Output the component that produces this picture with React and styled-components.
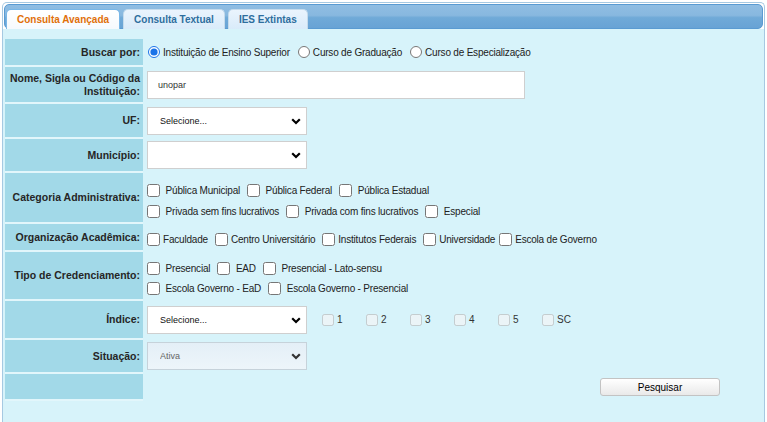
import React from 'react';
import styled, { createGlobalStyle } from 'styled-components';

const Global = createGlobalStyle`
  html, body { margin: 0; padding: 0; background: #fff; }
  body {
    font-family: "Liberation Sans", Arial, sans-serif;
    font-size: 10px;
    color: #222;
    overflow: hidden;
  }
`;

const Widget = styled.div`
  margin: 2px 2px 0 2px;
  height: 430px;
  border: 1px solid #a6c9e2;
  border-bottom: none;
  border-radius: 5px 5px 0 0;
  background: #fff;
  padding-top: 1px;
  display: flex;
  flex-direction: column;
  box-sizing: border-box;
`;

const Header = styled.div`
  margin: 0 1px;
  height: 25px;
  box-sizing: border-box;
  border: 1px solid #5a9bd2;
  border-radius: 5px;
  background: linear-gradient(#8fbde3 0%, #88b8df 45%, #70aad8 55%, #68a3d5 100%);
  padding: 4px 1px 0 1px;
  display: flex;
  gap: 3px;
`;

const Tab = styled.div`
  height: 20px;
  box-sizing: border-box;
  padding: 0 10px;
  display: flex;
  align-items: center;
  font-weight: bold;
  font-size: 10px;
  border: 1px solid ${p => (p.$active ? '#79b7e7' : '#c5dbec')};
  border-bottom: none;
  border-radius: 5px 5px 0 0;
  color: ${p => (p.$active ? '#e17009' : '#2e6e9e')};
  background: ${p =>
    p.$active
      ? 'linear-gradient(#ffffff, #f6fafd)'
      : 'linear-gradient(#eaf4fd, #d9ebfa)'};
  white-space: nowrap;
`;

const Panel = styled.div`
  flex: 1;
  background: #d7f3fa;
  padding: 10px 2px 0 2px;
`;

const Row = styled.div`
  display: flex;
  height: ${p => p.$h + 2}px;
`;

const Label = styled.div`
  width: 138px;
  box-sizing: border-box;
  background: #a2d9e8;
  border-bottom: 2px solid #e2f6fb;
  display: flex;
  align-items: center;
  justify-content: flex-end;
  text-align: right;
  padding-right: 3px;
  font-weight: bold;
  font-size: 10.5px;
  line-height: 13px;
  color: #262626;
`;

const Value = styled.div`
  flex: 1;
  display: flex;
  flex-direction: ${p => (p.$col ? 'column' : 'row')};
  align-items: ${p => (p.$top ? 'flex-start' : p.$col ? 'stretch' : 'center')};
  justify-content: ${p => (p.$col ? 'center' : 'flex-start')};
  padding-top: ${p => p.$pt || 0}px;
  padding-bottom: 2px;
  box-sizing: border-box;
  white-space: nowrap;
`;

const Line = styled.div`
  height: 21px;
  display: flex;
  align-items: center;
`;

const Opt = styled.label`
  display: inline-flex;
  align-items: center;
  color: #222;
  letter-spacing: -0.2px;
  margin-right: ${p => p.$gap ?? 3}px;
  input { margin: 0 3px 0 4px; width: 13px; height: 13px; }
`;

const RadioOpt = styled.label`
  display: inline-flex;
  align-items: center;
  color: #222;
  letter-spacing: -0.2px;
  margin-right: 3px;
  input { margin: 0 3px 0 5px; width: 12px; height: 12px; accent-color: #1a73e8; }
`;

const TextInput = styled.input`
  margin-left: 4px;
  width: 378px;
  height: 28px;
  box-sizing: border-box;
  border: 1px solid #cfcfcf;
  background: #fff;
  padding: 0 10px;
  font-family: "Liberation Sans", Arial, sans-serif;
  font-size: 9px;
  color: #333;
  outline: none;
`;

const SelectWrap = styled.div`
  position: relative;
  margin-left: 4px;
  width: 160px;
  height: 28px;
`;

const Select = styled.select`
  appearance: none;
  width: 100%;
  height: 100%;
  box-sizing: border-box;
  border: 1px solid ${p => (p.$muted ? '#c6d2da' : '#cfcfcf')};
  background: ${p => (p.$muted ? 'linear-gradient(#e4eff7, #edf5fa)' : '#fff')};
  padding: 0 0 0 12px;
  font-family: "Liberation Sans", Arial, sans-serif;
  font-size: 9px;
  color: ${p => (p.$muted ? '#666' : '#111')};
  outline: none;
`;

const Chevron = styled.svg`
  position: absolute;
  right: 6px;
  top: 11px;
  pointer-events: none;
`;

const IndexList = styled.div`
  display: flex;
  margin-left: 11px;
`;

const IndexOpt = styled.label`
  width: 44px;
  display: flex;
  align-items: center;
  color: #333;
  input { margin: 0 3px 0 4px; width: 12px; height: 12px; }
`;

const Button = styled.button`
  margin: 4px 0 0 457px;
  width: 120px;
  height: 18px;
  box-sizing: border-box;
  border: 1px solid #c3c3c3;
  border-radius: 3px;
  background: linear-gradient(#ffffff, #e9e9e9);
  font-family: "Liberation Sans", Arial, sans-serif;
  font-size: 10px;
  color: #000;
  padding: 0;
`;

const Dropdown = ({ value, muted }) => (
  <SelectWrap>
    <Select $muted={muted} defaultValue={value}>
      <option value={value}>{value}</option>
    </Select>
    <Chevron width="10" height="7" viewBox="0 0 10 7">
      <polyline points="1.2,1.2 5,5 8.8,1.2" fill="none" stroke={muted ? '#333' : '#000'} strokeWidth="2.2" />
    </Chevron>
  </SelectWrap>
);

const Check = ({ text, nb, gap }) => (
  <Opt $gap={gap}>
    <input type="checkbox" />
    {nb ? '\u00a0' : ''}
    {text}
  </Opt>
);

export default function App() {
  return (
    <>
      <Global />
      <Widget>
        <Header>
          <Tab $active>Consulta Avançada</Tab>
          <Tab>Consulta Textual</Tab>
          <Tab>IES Extintas</Tab>
        </Header>
        <Panel>
          <Row $h={26}>
            <Label>Buscar por:</Label>
            <Value>
              <RadioOpt><input type="radio" name="b" defaultChecked />Instituição de Ensino Superior</RadioOpt>
              <RadioOpt><input type="radio" name="b" />Curso de Graduação</RadioOpt>
              <RadioOpt><input type="radio" name="b" />Curso de Especialização</RadioOpt>
            </Value>
          </Row>
          <Row $h={35}>
            <Label>Nome, Sigla ou Código da<br />Instituição:</Label>
            <Value>
              <TextInput defaultValue="unopar" />
            </Value>
          </Row>
          <Row $h={33}>
            <Label>UF:</Label>
            <Value><Dropdown value="Selecione..." /></Value>
          </Row>
          <Row $h={32}>
            <Label>Município:</Label>
            <Value><Dropdown value="" /></Value>
          </Row>
          <Row $h={49}>
            <Label>Categoria Administrativa:</Label>
            <Value $col $pt={6}>
              <Line>
                <Check nb text="Pública Municipal" />
                <Check nb text="Pública Federal" />
                <Check nb text="Pública Estadual" />
              </Line>
              <Line>
                <Check nb text="Privada sem fins lucrativos" />
                <Check nb text="Privada com fins lucrativos" />
                <Check nb text="Especial" />
              </Line>
            </Value>
          </Row>
          <Row $h={26}>
            <Label>Organização Acadêmica:</Label>
            <Value $pt={4}>
              <Check text="Faculdade" />
              <Check text="Centro Universitário" />
              <Check text="Institutos Federais" />
              <Check text="Universidade" gap={0} />
              <Check text="Escola de Governo" />
            </Value>
          </Row>
          <Row $h={47}>
            <Label>Tipo de Credenciamento:</Label>
            <Value $col $pt={6}>
              <Line>
                <Check nb text="Presencial" />
                <Check nb text="EAD" />
                <Check nb text="Presencial - Lato-sensu" />
              </Line>
              <Line>
                <Check nb text="Escola Governo - EaD" />
                <Check nb text="Escola Governo - Presencial" />
              </Line>
            </Value>
          </Row>
          <Row $h={37}>
            <Label>Índice:</Label>
            <Value>
              <Dropdown value="Selecione..." />
              <IndexList>
                {['1', '2', '3', '4', '5', 'SC'].map(v => (
                  <IndexOpt key={v}><input type="checkbox" disabled />{v}</IndexOpt>
                ))}
              </IndexList>
            </Value>
          </Row>
          <Row $h={32}>
            <Label>Situação:</Label>
            <Value><Dropdown value="Ativa" muted /></Value>
          </Row>
          <Row $h={25}>
            <Label />
            <Value $top>
              <Button>Pesquisar</Button>
            </Value>
          </Row>
        </Panel>
      </Widget>
    </>
  );
}
